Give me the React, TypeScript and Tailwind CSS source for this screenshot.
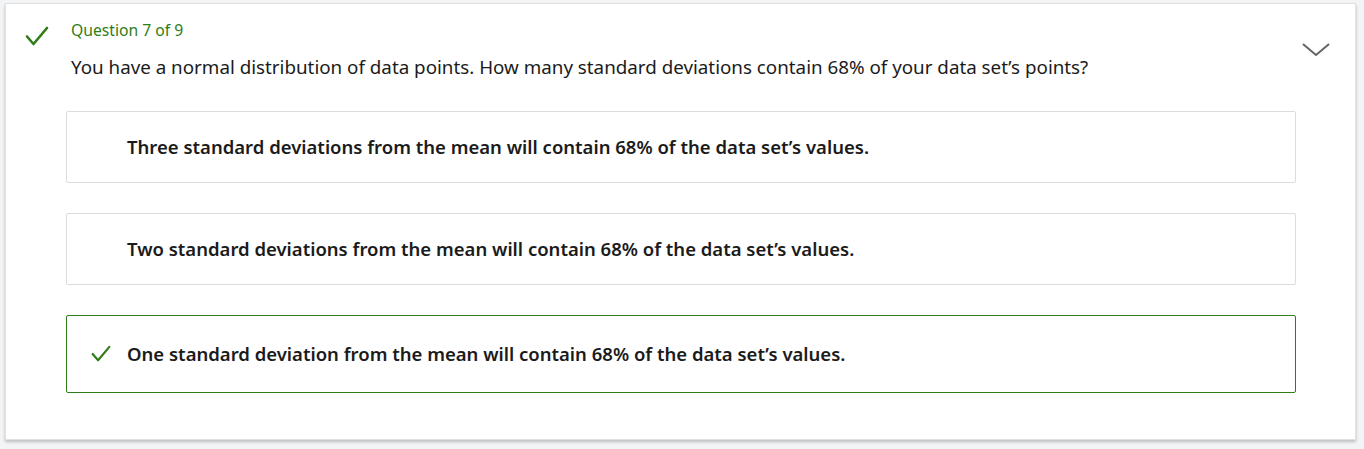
const options = [
    { text: "Three standard deviations from the mean will contain 68% of the data set\u2019s values.", correct: false },
    { text: "Two standard deviations from the mean will contain 68% of the data set\u2019s values.", correct: false },
    { text: "One standard deviation from the mean will contain 68% of the data set\u2019s values.", correct: true },
];

function Check({ className }: { className?: string }) {
    return (
        <svg viewBox="0 0 24 20" className={className} fill="none" stroke="currentColor" strokeWidth="2.6" strokeLinecap="round" strokeLinejoin="round">
            <path d="M2 10 L8.5 17.5 L22 1.5" />
        </svg>
    );
}

function App() {
    return (
        <div className="min-h-screen bg-[#f3f4f6] px-[5px] pt-[3px] font-['Noto_Sans',sans-serif]">
            <div className="flex w-[1351px] border border-[#e1e1e1] bg-white pb-[46px] shadow-[0_2px_3px_rgba(0,0,0,0.22)]">
                <div className="w-[60px] shrink-0 pl-[19px] pt-[22px]">
                    <Check className="h-[21px] w-[24px] text-[#2f7d17]" />
                </div>
                <div className="flex-1">
                    <div className="flex items-start">
                        <div className="flex-1 pl-[5px] pt-[16px]">
                            <div className="text-[15.7px] leading-5 text-[#2f7d17]">Question 7 of 9</div>
                            <div className="mt-[15px] text-[18.8px] leading-6 text-[#1b1b1b]">
                                You have a normal distribution of data points. How many standard deviations contain 68% of your data set&rsquo;s points?
                            </div>
                        </div>
                        <svg viewBox="0 0 28 14" className="mr-[25px] mt-[39px] h-[14px] w-[28px] text-[#666]" fill="none" stroke="currentColor" strokeWidth="2" strokeLinecap="round" strokeLinejoin="round">
                            <path d="M1.5 1.5 L14 12 L26.5 1.5" />
                        </svg>
                    </div>
                    <div className="mt-[32px] flex w-[1230px] flex-col gap-[30px]">
                        {options.map((o) => (
                            <div
                                key={o.text}
                                className={
                                    o.correct
                                        ? "flex h-[78px] items-center rounded-[2px] border border-[#2f7d17] pl-[24px]"
                                        : "flex h-[72px] items-center rounded-[2px] border border-[#dcdcdc] pl-[60px]"
                                }
                            >
                                {o.correct && <Check className="mr-[16px] h-[18px] w-[20px] text-[#2f7d17]" />}
                                <span className="text-[18.5px] font-semibold text-[#1b1b1b]">{o.text}</span>
                            </div>
                        ))}
                    </div>
                </div>
            </div>
        </div>
    );
}

export default App;
